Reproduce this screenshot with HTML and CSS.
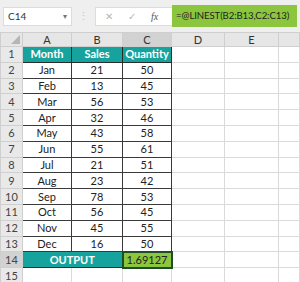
FILE: index.html
```html
<!DOCTYPE html>
<html lang="en">
<head>
    <meta charset="UTF-8">
    <title>LINEST</title>
    <link rel="stylesheet" href="styles.css">
</head>
<body>
    <div class="toolbar">
        <div class="name-box">
            <span>C14</span>
            <span class="caret">&#9662;</span>
        </div>
        <div class="grip">&#8942;</div>
        <div class="formula-box">
            <span class="btn">&#10005;</span>
            <span class="btn">&#10003;</span>
            <span class="fx">fx</span>
        </div>
        <div class="formula">=@LINEST(B2:B13,C2:C13)</div>
    </div>

    <table class="sheet">
        <colgroup>
            <col style="width:22px">
            <col style="width:49px">
            <col style="width:51px">
            <col style="width:49px">
            <col style="width:53px">
            <col style="width:54px">
            <col>
        </colgroup>
        <thead>
            <tr class="col-heads">
                <th class="corner"><span class="tri"></span></th>
                <th>A</th>
                <th>B</th>
                <th class="picked">C</th>
                <th>D</th>
                <th>E</th>
                <th></th>
            </tr>
        </thead>
        <tbody id="rows"></tbody>
    </table>

    <script>
        const data = [
            ['Jan', 21, 50], ['Feb', 13, 45], ['Mar', 56, 53], ['Apr', 32, 46],
            ['May', 43, 58], ['Jun', 55, 61], ['Jul', 21, 51], ['Aug', 23, 42],
            ['Sep', 78, 53], ['Oct', 56, 45], ['Nov', 45, 55], ['Dec', 16, 50]
        ];
        const body = document.getElementById('rows');
        let html = '<tr><td class="rh">1</td><td class="head">Month</td><td class="head">Sales</td><td class="head">Quantity</td><td></td><td></td><td></td></tr>';
        data.forEach((r, i) => {
            html += '<tr><td class="rh">' + (i + 2) + '</td><td class="cell">' + r[0] + '</td><td class="cell">' + r[1] + '</td><td class="cell">' + r[2] + '</td><td></td><td></td><td></td></tr>';
        });
        html += '<tr><td class="rh picked">14</td><td class="head" colspan="2">OUTPUT</td><td class="result">1.69127</td><td></td><td></td><td></td></tr>';
        html += '<tr><td class="rh">15</td><td></td><td></td><td></td><td></td><td></td><td></td></tr>';
        body.innerHTML = html;
    </script>
</body>
</html>
```
FILE: styles.css
```css
body {
    margin: 0;
    width: 300px;
    height: 282px;
    overflow: hidden;
    background: #fff;
    font-family: Lato, "Open Sans", sans-serif;
}

.toolbar {
    display: flex;
    align-items: center;
    height: 32px;
    background: #efefef;
    position: relative;
}

.name-box {
    display: flex;
    align-items: center;
    justify-content: space-between;
    box-sizing: border-box;
    width: 69px;
    height: 19px;
    margin-left: 3px;
    padding: 0 4px;
    background: #fff;
    border: 1px solid #dcdcdc;
    font-size: 10px;
    color: #333;
}

.caret {
    font-size: 8px;
    color: #777;
}

.grip {
    width: 23px;
    text-align: center;
    font-size: 11px;
    color: #c4c4c4;
}

.formula-box {
    display: flex;
    align-items: center;
    box-sizing: border-box;
    width: 77px;
    height: 19px;
    background: #fff;
    border: 1px solid #dcdcdc;
    border-right: none;
}

.btn {
    width: 23px;
    text-align: center;
    font-size: 10px;
    color: #b8b8b8;
}

.btn:first-child {
    margin-left: 1px;
}

.fx {
    margin-left: 8px;
    font-family: "Liberation Serif", serif;
    font-style: italic;
    font-size: 10px;
    color: #555;
}

.formula {
    box-sizing: border-box;
    width: 125px;
    height: 22px;
    line-height: 22px;
    padding-left: 4px;
    background: #8cc63f;
    font-size: 9.6px;
    letter-spacing: -0.1px;
    color: #222;
    white-space: nowrap;
    overflow: hidden;
}

.sheet {
    border-collapse: collapse;
    table-layout: fixed;
    width: 300px;
}

.sheet th,
.sheet td {
    box-sizing: border-box;
    height: 15.8px;
    padding: 0;
    border: 1px solid #dadada;
    text-align: center;
    font-size: 11px;
    line-height: 12px;
    color: #222;
    white-space: nowrap;
    overflow: hidden;
}

.col-heads th {
    height: 14px;
    background: #e6e6e6;
    border-color: #cfcfcf;
    font-weight: normal;
    color: #333;
}

.col-heads th.picked {
    background: #d2d2d2;
}

.corner {
    position: relative;
}

.tri {
    position: absolute;
    right: 2px;
    bottom: 2px;
    width: 0;
    height: 0;
    border-left: 9px solid transparent;
    border-bottom: 9px solid #b5b5b5;
}

.sheet td.rh {
    background: #e9e9e9;
    border-color: #cfcfcf;
    color: #444;
}

.sheet td.rh.picked {
    background: #d2d2d2;
}

.sheet td.head {
    background: #17a39d;
    border: 1px solid #2b2b2b;
    color: #fff;
    font-weight: bold;
}

.sheet td.cell {
    border: 1px solid #3a3a3a;
}

.sheet td.result {
    background: #8cc63f;
    border: 2px solid #1f4d2a;
    color: #222;
}
```
